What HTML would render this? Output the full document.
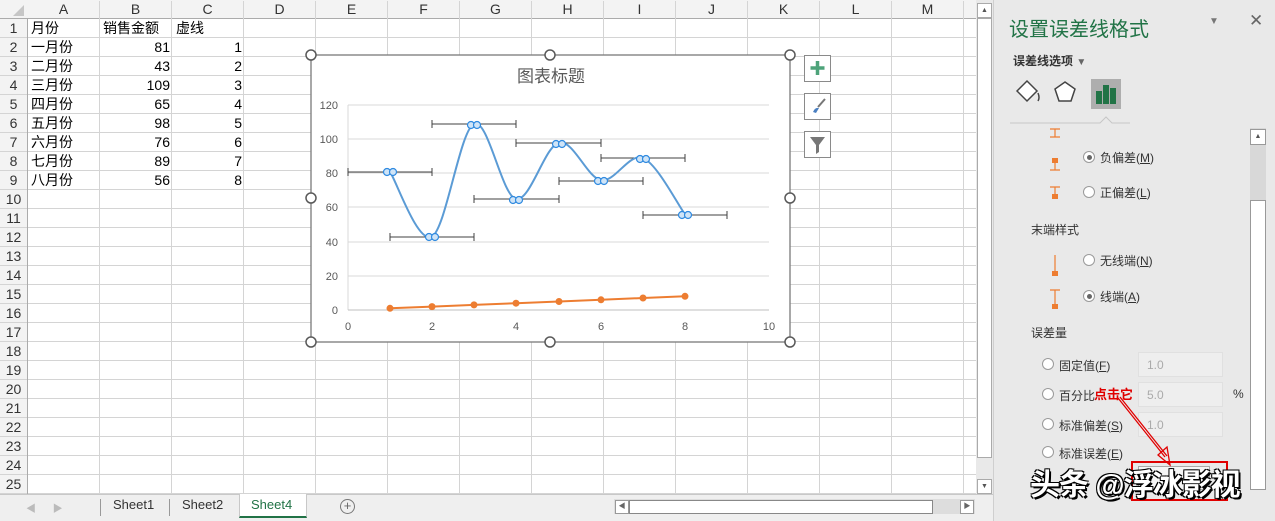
<!DOCTYPE html>
<html><head><meta charset="utf-8">
<style>
*{margin:0;padding:0;box-sizing:border-box}
body{width:1275px;height:521px;overflow:hidden;background:#fff;position:relative;font-family:"Liberation Sans","Noto Sans CJK SC",sans-serif;font-size:14px;color:#000}
.a{position:absolute;white-space:nowrap}
#grid{position:absolute;left:28px;top:19px;width:948px;height:475px;
background-image:linear-gradient(to right,#d4d4d4 1px,transparent 1px),linear-gradient(to bottom,#d4d4d4 1px,transparent 1px);
background-size:72px 19px;background-position:-1px -1px}
#colh{position:absolute;left:0;top:0;width:976px;height:19px;background:#f3f3f3;border-bottom:1px solid #ababab}
#rowh{position:absolute;left:0;top:19px;width:28px;height:475px;background:#f3f3f3;border-right:1px solid #ababab}
.ch{position:absolute;top:1px;width:72px;text-align:center;font-size:14px;color:#333;border-right:1px solid #d4d4d4;height:18px}
.rh{position:absolute;left:0;width:27px;text-align:center;font-size:14px;color:#333;height:19px;line-height:19px;border-bottom:1px solid #d4d4d4}
.c{position:absolute;height:19px;line-height:19px;font-size:14px}
.r{text-align:right;width:68px}
#panel{position:absolute;left:993px;top:0;width:282px;height:521px;background:#e9e9e9;border-left:1px solid #cfcfcf}
.rad{position:absolute;width:12px;height:12px;border-radius:50%;background:#fff;border:1px solid #9a9a9a}
.rad.on::after{content:"";position:absolute;left:2.5px;top:2.5px;width:5px;height:5px;border-radius:50%;background:#666}
.pt{position:absolute;font-size:12px;color:#333;white-space:nowrap}
.inp{position:absolute;width:85px;height:25px;background:#eee;border:1px solid #e0e0e0;color:#aaa;font-size:12px;padding:5px 0 0 8px}
</style></head><body>
<div id="grid"></div>
<div id="colh"></div>
<div id="rowh"></div>
<svg class="a" style="left:0;top:0" width="28" height="19"><path d="M24 5 L24 16 L13 16 Z" fill="#c6c6c6"/></svg>

<!-- chart -->
<svg class="a" style="left:0;top:0" width="993" height="494">
<rect x="311" y="55" width="479" height="287" fill="#fff" stroke="#7a7a7a" stroke-width="1.3"/>
<text x="551" y="82" font-size="17" fill="#595959" text-anchor="middle" font-family="Liberation Sans,Noto Sans CJK SC,sans-serif">图表标题</text>
<g stroke="#d9d9d9" stroke-width="1">
<line x1="348" y1="105" x2="769" y2="105"/><line x1="348" y1="139" x2="769" y2="139"/><line x1="348" y1="173" x2="769" y2="173"/><line x1="348" y1="207" x2="769" y2="207"/><line x1="348" y1="242" x2="769" y2="242"/><line x1="348" y1="276" x2="769" y2="276"/>
<line x1="348" y1="105" x2="348" y2="310"/>
</g>
<line x1="348" y1="310" x2="769" y2="310" stroke="#bfbfbf"/>
<g font-size="11" fill="#595959" text-anchor="end" font-family="Liberation Sans,sans-serif">
<text x="338" y="109">120</text><text x="338" y="143">100</text><text x="338" y="177">80</text><text x="338" y="211">60</text><text x="338" y="246">40</text><text x="338" y="280">20</text><text x="338" y="314">0</text>
</g>
<g font-size="11" fill="#595959" text-anchor="middle" font-family="Liberation Sans,sans-serif">
<text x="348" y="330">0</text><text x="432" y="330">2</text><text x="516" y="330">4</text><text x="601" y="330">6</text><text x="685" y="330">8</text><text x="769" y="330">10</text>
</g>
<g stroke="#404040" stroke-width="1">
<path d="M348 172H432M348 168v8M432 168v8"/>
<path d="M390 237H474M390 233v8M474 233v8"/>
<path d="M432 124H516M432 120v8M516 120v8"/>
<path d="M474 199H559M474 195v8M559 195v8"/>
<path d="M516 143H601M516 139v8M601 139v8"/>
<path d="M559 181H643M559 177v8M643 177v8"/>
<path d="M601 158H685M601 154v8M685 154v8"/>
<path d="M643 215H727M643 211v8M727 211v8"/>
</g>
<path d="M390 171.7 C397 182.5 418 244.6 432 236.6 C446 228.6 460 130.1 474 123.8 C488 117.5 501.8 195.9 516 199 C530.2 202.1 544.8 145.7 559 142.6 C573.2 139.5 587 177.6 601 180.2 C615 182.8 629 152.3 643 158 C657 163.7 678 205 685 214.4" fill="none" stroke="#5b9bd5" stroke-width="2"/>
<g fill="#cfe4f7" stroke="#2f8ae0" stroke-width="1.2" id="mk">
<circle cx="387" cy="172" r="3.5"/><circle cx="393" cy="172" r="3.5"/>
<circle cx="429" cy="237" r="3.5"/><circle cx="435" cy="237" r="3.5"/>
<circle cx="471" cy="125" r="3.5"/><circle cx="477" cy="125" r="3.5"/>
<circle cx="513" cy="200" r="3.5"/><circle cx="519" cy="200" r="3.5"/>
<circle cx="556" cy="144" r="3.5"/><circle cx="562" cy="144" r="3.5"/>
<circle cx="598" cy="181" r="3.5"/><circle cx="604" cy="181" r="3.5"/>
<circle cx="640" cy="159" r="3.5"/><circle cx="646" cy="159" r="3.5"/>
<circle cx="682" cy="215" r="3.5"/><circle cx="688" cy="215" r="3.5"/>
</g>
<polyline points="390,308.3 432,306.6 474,304.9 516,303.2 559,301.5 601,299.8 643,298 685,296.3" fill="none" stroke="#ed7d31" stroke-width="2"/>
<g fill="#ed7d31">
<circle cx="390" cy="308.3" r="3.5"/><circle cx="432" cy="306.6" r="3.5"/><circle cx="474" cy="304.9" r="3.5"/><circle cx="516" cy="303.2" r="3.5"/><circle cx="559" cy="301.5" r="3.5"/><circle cx="601" cy="299.8" r="3.5"/><circle cx="643" cy="298" r="3.5"/><circle cx="685" cy="296.3" r="3.5"/>
</g>
<g fill="#fff" stroke="#595959" stroke-width="1.5">
<circle cx="311" cy="55" r="5"/><circle cx="550" cy="55" r="5"/><circle cx="790" cy="55" r="5"/>
<circle cx="311" cy="198" r="5"/><circle cx="790" cy="198" r="5"/>
<circle cx="311" cy="342" r="5"/><circle cx="550" cy="342" r="5"/><circle cx="790" cy="342" r="5"/>
</g>
<g fill="#fff" stroke="#8a8a8a">
<rect x="804.5" y="55.5" width="26" height="26"/><rect x="804.5" y="93.5" width="26" height="26"/><rect x="804.5" y="131.5" width="26" height="26"/>
</g>
<path d="M817.5 61v14M810.5 68h14" stroke="#4ea37a" stroke-width="3.5"/>
<path d="M813 112 q2 -5 6 -4 l-3 5z" fill="#4a7fc1"/><path d="M818 107 l7 -8" stroke="#777" stroke-width="2"/>
<path d="M810 137h15l-6 8v7l-3 2v-9z" fill="#777"/>
<!-- tab bar separator -->
</svg>

<!-- vertical scrollbar sheet -->
<div class="a" style="left:976px;top:0;width:17px;height:494px;background:#e9e9e9"></div>
<div class="a" style="left:977px;top:3px;width:15px;height:15px;background:#fff;border:1px solid #aaa;font-size:7px;text-align:center;line-height:13px;color:#555">▲</div>
<div class="a" style="left:977px;top:18px;width:15px;height:440px;background:#fff;border:1px solid #aaa"></div>
<div class="a" style="left:977px;top:479px;width:15px;height:15px;background:#fff;border:1px solid #aaa;font-size:7px;text-align:center;line-height:13px;color:#555">▼</div>

<!-- tab bar -->
<div class="a" style="left:0;top:494px;width:993px;height:27px;background:#efefef;border-top:1px solid #c8c8c8"></div>
<div class="a" style="left:26px;top:500px;font-size:10px;color:#bbb">◀&nbsp;&nbsp;&nbsp;&nbsp;&nbsp;&nbsp;▶</div>
<div class="a" style="left:100px;top:499px;width:1px;height:17px;background:#999"></div>
<div class="a" style="left:169px;top:499px;width:1px;height:17px;background:#999"></div>
<div class="a" style="left:113px;top:497px;font-size:13px;color:#333">Sheet1</div>
<div class="a" style="left:182px;top:497px;font-size:13px;color:#333">Sheet2</div>
<div class="a" style="left:239px;top:494px;width:68px;height:24px;background:#fff;border-bottom:2px solid #217346;border-left:1px solid #c8c8c8;border-right:1px solid #c8c8c8"></div>
<div class="a" style="left:251px;top:497px;font-size:13px;color:#217346">Sheet4</div>
<div class="a" style="left:340px;top:499px;width:15px;height:15px;border:1px solid #777;border-radius:50%;font-size:13px;line-height:12px;text-align:center;color:#666">+</div>
<div class="a" style="left:614px;top:499px;width:361px;height:15px;background:#ddd"></div>
<div class="a" style="left:615px;top:500px;width:14px;height:14px;background:#fff;border:1px solid #999;font-size:7px;text-align:center;line-height:12px;color:#666">◀</div>
<div class="a" style="left:629px;top:500px;width:304px;height:14px;background:#fff;border:1px solid #888"></div>
<div class="a" style="left:960px;top:500px;width:14px;height:14px;background:#fff;border:1px solid #999;font-size:7px;text-align:center;line-height:12px;color:#666">▶</div>

<!-- panel -->
<div id="panel"></div>
<div class="a" style="left:1009px;top:13px;font-size:20px;color:#217346">设置误差线格式</div>
<div class="a" style="left:1209px;top:16px;font-size:10px;color:#777">▼</div>
<div class="a" style="left:1249px;top:11px;font-size:17px;color:#666">✕</div>
<div class="a" style="left:1013px;top:52px;font-size:12px;font-weight:bold;color:#333">误差线选项 <span style="color:#666;font-size:10px">▼</span></div>
<svg class="a" style="left:1010px;top:75px" width="120" height="50">
<path d="M7 16 l10 -10 l10 10 l-10 10z" fill="#fff" stroke="#444" stroke-width="1.5"/>
<path d="M28 18 q2 5 0 8" stroke="#444" fill="none" stroke-width="1.5"/>
<path d="M55 7 l10 7 l-4 12 h-12 l-4 -12z" fill="#fff" stroke="#444" stroke-width="1.5"/>
<rect x="81" y="4" width="30" height="30" fill="#aeaeae"/>
<rect x="86" y="16" width="6" height="13" fill="#217346"/><rect x="93" y="10" width="6" height="19" fill="#217346"/><rect x="100" y="13" width="6" height="16" fill="#217346"/>
<path d="M0 48 H90 L96 42 L102 48 H260" stroke="#c6c6c6" fill="none"/>
</svg>
<!-- panel scrollbar -->
<div class="a" style="left:1250px;top:128px;width:16px;height:362px;background:#d8d8d8"></div>
<div class="a" style="left:1250px;top:129px;width:16px;height:16px;background:#fff;border:1px solid #999;font-size:7px;text-align:center;line-height:14px;color:#555">▲</div>
<div class="a" style="left:1250px;top:200px;width:16px;height:290px;background:#fff;border:1px solid #999"></div>

<svg class="a" style="left:1045px;top:125px" width="30" height="190" stroke="#ed7d31" fill="#ed7d31" stroke-width="1.2">
<path d="M5 12h10M10 4v8M5 4h10" fill="none"/>
<rect x="7" y="33" width="6" height="5" stroke="none"/><path d="M10 38v7M5 45h10" fill="none"/>
<path d="M5 62h10M10 62v8" fill="none"/><rect x="7" y="69" width="6" height="5" stroke="none"/>
<path d="M10 130v18" fill="none"/><rect x="7" y="146" width="6" height="5" stroke="none"/>
<path d="M5 165h10M10 165v15" fill="none"/><rect x="7" y="179" width="6" height="5" stroke="none"/>
</svg>
<div class="rad on" style="left:1083px;top:151px"></div><div class="pt" style="left:1100px;top:149px">负偏差(<u>M</u>)</div>
<div class="rad" style="left:1083px;top:186px"></div><div class="pt" style="left:1100px;top:184px">正偏差(<u>L</u>)</div>
<div class="pt" style="left:1031px;top:221px">末端样式</div>
<div class="rad" style="left:1083px;top:254px"></div><div class="pt" style="left:1100px;top:252px">无线端(<u>N</u>)</div>
<div class="rad on" style="left:1083px;top:290px"></div><div class="pt" style="left:1100px;top:288px">线端(<u>A</u>)</div>
<div class="pt" style="left:1031px;top:324px">误差量</div>
<div class="rad" style="left:1042px;top:358px"></div><div class="pt" style="left:1059px;top:357px">固定值(<u>F</u>)</div>
<div class="inp" style="left:1138px;top:352px">1.0</div>
<div class="rad" style="left:1042px;top:388px"></div><div class="pt" style="left:1059px;top:387px">百分比</div>
<div class="inp" style="left:1138px;top:382px">5.0</div>
<div class="pt" style="left:1233px;top:387px">%</div>
<div class="rad" style="left:1042px;top:418px"></div><div class="pt" style="left:1059px;top:417px">标准偏差(<u>S</u>)</div>
<div class="inp" style="left:1138px;top:412px">1.0</div>
<div class="rad" style="left:1042px;top:446px"></div><div class="pt" style="left:1059px;top:445px">标准误差(<u>E</u>)</div>
<div class="a" style="left:1138px;top:466px;width:72px;height:24px;background:#f5f5f5;border:1px solid #aaa"></div>
<div class="a" style="left:1131px;top:461px;width:97px;height:40px;border:2px solid #e00000"></div>
<div class="a" style="left:1094px;top:384px;font-size:13px;font-weight:bold;color:#e00000">点击它</div>
<svg class="a" style="left:1110px;top:395px" width="70" height="75"><path d="M8 3 L55 62 M10 2 L57 61" stroke="#e00000" stroke-width="1.3"/><path d="M48 60 L60 70 L57 52 Z" fill="none" stroke="#e00000" stroke-width="1.3"/></svg>
<div class="a" style="left:1030px;top:460px;font-size:30px;font-weight:bold;color:#fff;text-shadow:2px 2px 0 #000,-1px -1px 0 #000,1px -1px 0 #000,-1px 1px 0 #000;letter-spacing:-1px">头条 @浮冰影视</div>

<script>
var ch=document.getElementById('colh'),rh=document.getElementById('rowh');
var L="ABCDEFGHIJKLM";
for(var i=0;i<13;i++){var d=document.createElement('div');d.className='ch';d.style.left=(28+72*i)+'px';d.textContent=L[i];ch.appendChild(d);}
for(var r=1;r<=25;r++){var d=document.createElement('div');d.className='rh';d.style.top=(19*(r-1))+'px';d.textContent=r;rh.appendChild(d);}
var m=["一","二","三","四","五","六","七","八"],v=[81,43,109,65,98,76,89,56];
function cell(x,y,t,cls){var d=document.createElement('div');d.className='c '+(cls||'');d.style.left=x+'px';d.style.top=y+'px';d.textContent=t;document.body.appendChild(d);}
cell(31,19,"月份");cell(103,19,"销售金额");cell(176,19,"虚线");
for(var k=0;k<8;k++){var y=38+19*k;cell(31,y,m[k]+"月份");cell(102,y,v[k],'r');cell(174,y,k+1,'r');}
</script>
</body></html>
